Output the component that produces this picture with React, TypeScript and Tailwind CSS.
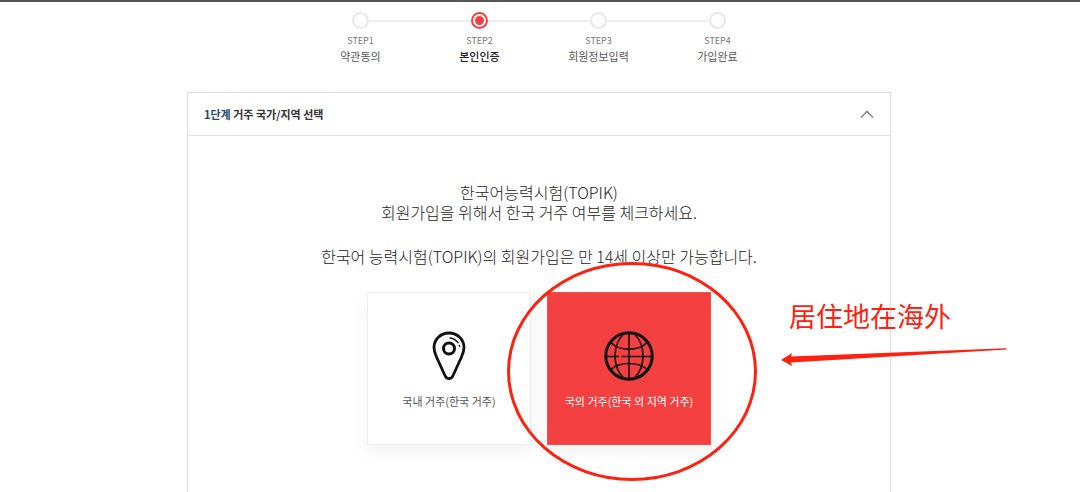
import { FC, ReactNode } from 'react';

interface Step {
  id: string;
  label: string;
}

interface ResidenceCardProps {
  label: string;
  selected?: boolean;
  icon: ReactNode;
  children?: ReactNode;
}

const steps: Step[] = [
  { id: 'STEP1', label: '약관동의' },
  { id: 'STEP2', label: '본인인증' },
  { id: 'STEP3', label: '회원정보입력' },
  { id: 'STEP4', label: '가입완료' },
];

const currentStep = 1;

const PinIcon: FC = () => (
  <svg className="w-[34px] h-[50px]" viewBox="0 0 34 50" fill="none" stroke="#111" strokeLinecap="round" strokeLinejoin="round">
    <path strokeWidth="2.8" d="M17 2C8.500 2 2 8.500 2 16.500c0 3.500 1.200 6.500 2.500 9.500l8.700 19c1.600 3.500 6 3.500 7.600 0l8.700-19c1.300-3 2.500-6 2.500-9.500C32 8.500 25.500 2 17 2z" />
    <circle cx="17" cy="17.500" r="5.500" strokeWidth="3" />
    <path strokeWidth="1.400" d="M18 7c3.500.3 6 1.900 8 4.700M27.300 14.500l.3.900" />
  </svg>
);

const GlobeIcon: FC = () => (
  <svg className="w-[50px] h-[50px]" viewBox="0 0 50 50" fill="none" stroke="#111" strokeWidth="1.600">
    <circle cx="25" cy="25" r="23.200" strokeWidth="3" />
    <path d="M25 2v46M2 25.500h13M17.500 25.500H48" />
    <path d="M20 2.500C8 14 8 36 20 47.500M30 2.500C42 14 42 36 30 47.500" />
    <path d="M7 11.500c8 9 28 9 36 0M7 38.500c8-8 28-8 36 0" />
  </svg>
);

const StepList: FC = () => (
  <ol className="flex justify-center pt-2.5">
    {steps.map((step, index) => {
      const active = index === currentStep;
      return (
        <li key={step.id} className="w-[119px] flex flex-col items-center">
          <div className="w-full flex items-center">
            <span className={index === 0 ? 'flex-1' : 'flex-1 h-0.5 bg-[#eeeeee]'} />
            <span
              className={`w-[17px] h-[17px] rounded-full border-2 bg-white flex items-center justify-center ${active ? 'border-[#f44040]' : 'border-[#e8e8e8]'}`}
            >
              {active && <span className="w-[9px] h-[9px] rounded-full bg-[#f44040]" />}
            </span>
            <span className={index === steps.length - 1 ? 'flex-1' : 'flex-1 h-0.5 bg-[#eeeeee]'} />
          </div>
          <span className="mt-1.5 text-[9px] leading-3 text-[#777]">{step.id}</span>
          <span className={`mt-0.5 text-[11px] leading-3.5 ${active ? 'font-medium text-[#222]' : 'text-[#555]'}`}>{step.label}</span>
        </li>
      );
    })}
  </ol>
);

const ResidenceCard: FC<ResidenceCardProps> = ({ label, selected = false, icon, children }) => (
  <div className="relative">
    <button
      type="button"
      aria-pressed={selected}
      className={`w-[164px] h-[153px] pt-0.5 flex flex-col items-center justify-center gap-3 border shadow-[0_8px_16px_rgba(0,0,0,0.05)] ${selected ? 'bg-[#f44040] border-[#f05050] text-white' : 'bg-white border-[#eeeeee] text-[#555]'}`}
    >
      {icon}
      <span className="text-[11px] leading-4 whitespace-nowrap">{label}</span>
    </button>
    {children}
  </div>
);

const App: FC = () => {
  return (
    <main className="h-screen overflow-hidden bg-white border-t-2 border-[#555] pr-0.5 flex flex-col font-['Noto_Sans_CJK_KR',sans-serif]">
      <StepList />

      <section className="mt-[29px] mx-auto w-full max-w-[704px] flex-1 border border-b-0 border-[#dddddd]">
        <h2>
          <button type="button" aria-expanded="true" className="w-full h-[43px] px-4 flex items-center justify-between border-b border-[#e2e2e2]">
            <span className="text-[11px] font-bold text-[#333]">
              <span className="text-[#234a6d]">1단계</span> 거주 국가/지역 선택
            </span>
            <svg className="w-3.5 h-3.5" viewBox="0 0 14 14" fill="none" stroke="#888" strokeWidth="1.600">
              <path d="M1 10.500l6-6 6 6" />
            </svg>
          </button>
        </h2>

        <div className="pt-[46px] text-center text-[16px] leading-5 font-light text-[#222]">
          <p>
            한국어능력시험(TOPIK)
            <br />
            회원가입을 위해서 한국 거주 여부를 체크하세요.
          </p>
          <p className="mt-6">한국어 능력시험(TOPIK)의 회원가입은 만 14세 이상만 가능합니다.</p>
        </div>

        <div className="mt-[26px] flex justify-center gap-4">
          <ResidenceCard label="국내 거주(한국 거주)" icon={<PinIcon />} />
          <ResidenceCard label="국외 거주(한국 외 지역 거주)" selected icon={<GlobeIcon />}>
            {/* Hand-drawn note over the card */}
            <div className="absolute -left-10 -top-[30px] w-[250px] h-[219px] rounded-[50%] border-[3px] border-[#ff2010] pointer-events-none" />
            <div className="absolute left-[234px] top-1 text-[#ff2010] pointer-events-none">
              <p className="pl-2 text-[27px] leading-10 whitespace-nowrap font-['Noto_Sans_CJK_SC',sans-serif]">居住地在海外</p>
              <svg className="mt-3 w-[227px] h-5" viewBox="0 0 227 20" fill="currentColor">
                <path d="M0 12L11 5L10 8.500L225 .3L226 1.500L10 14.500L11 18z" />
              </svg>
            </div>
          </ResidenceCard>
        </div>
      </section>
    </main>
  );
};

export default App;
